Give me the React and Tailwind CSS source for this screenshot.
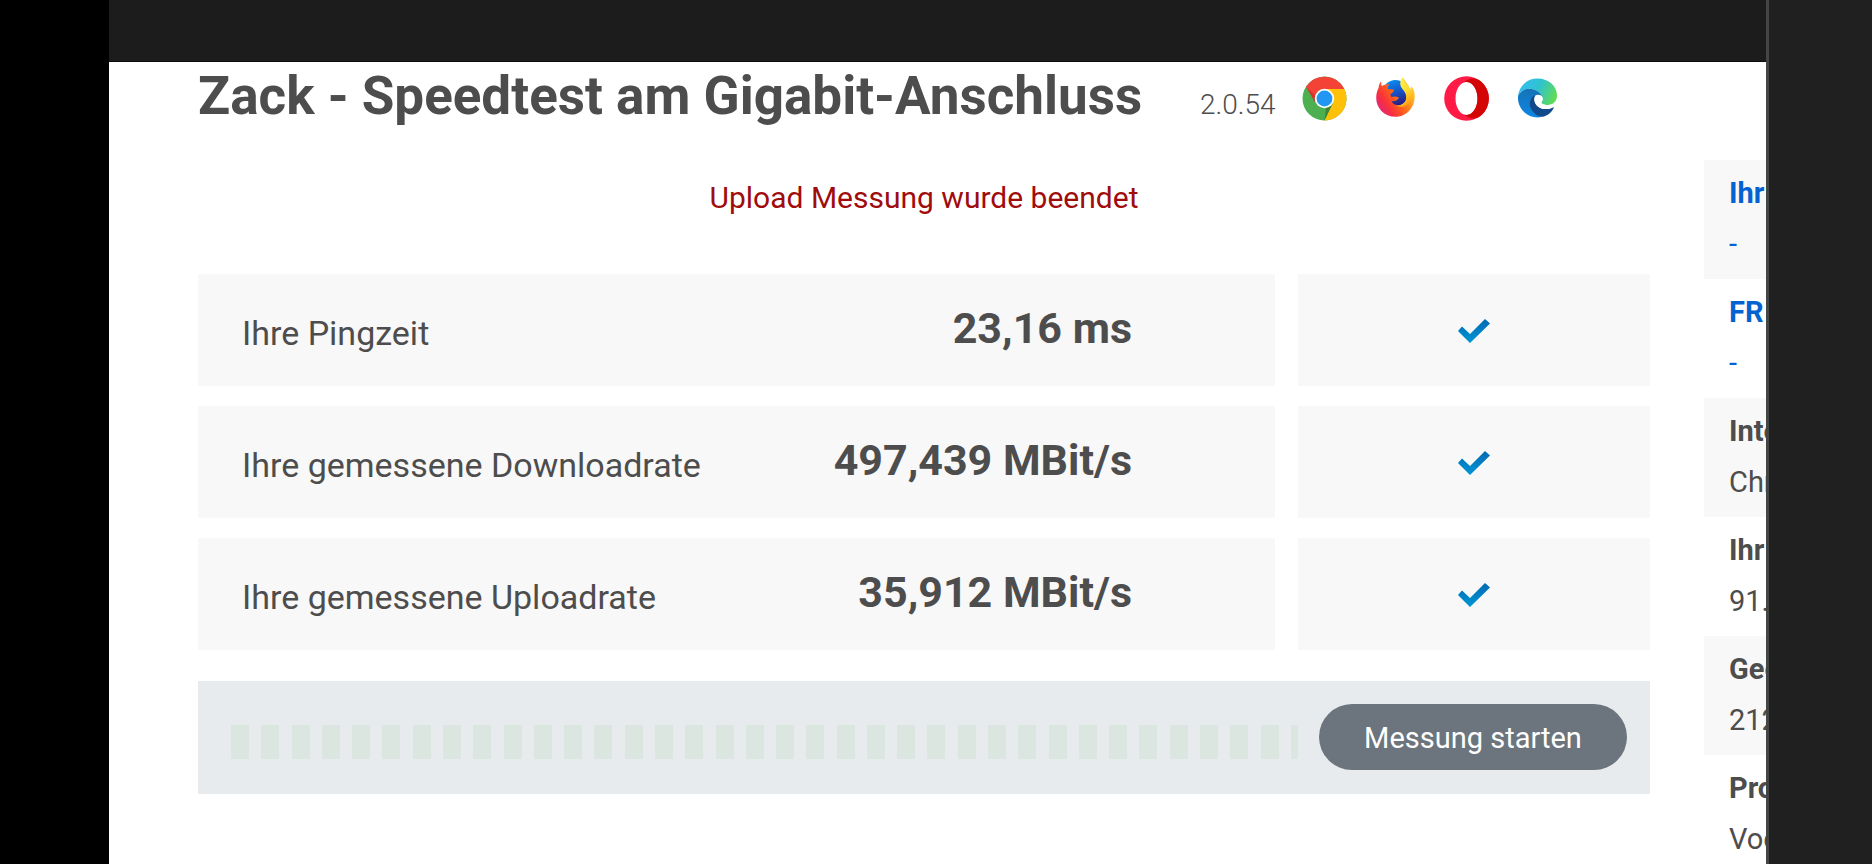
import React from "react";

const results = [
    { label: "Ihre Pingzeit", value: "23,16 ms" },
    { label: "Ihre gemessene Downloadrate", value: "497,439 MBit/s" },
    { label: "Ihre gemessene Uploadrate", value: "35,912 MBit/s" },
];

const details = [
    { label: "Ihr", value: "-", link: true },
    { label: "FR", value: "-", link: true },
    { label: "Inte", value: "Chr" },
    { label: "Ihr", value: "91." },
    { label: "Geg", value: "212" },
    { label: "Pro", value: "Vod" },
];

const segments = Array.from({ length: 36 }, (_, i) => i);

const ChromeIcon = () => (
    <svg viewBox="0 0 45 45" className="size-[45px]" role="img" aria-label="Chrome">
        <circle cx="22.5" cy="22.5" r="22" fill="#4caf50" />
        <path d="M22.5 13H42.3A22 22 0 0 1 22.5 44.5L30.7 27.5Z" fill="#ffc107" />
        <path d="M4 10.8A22 22 0 0 1 42.3 13H22.5A9.7 9.7 0 0 0 13.4 26.5Z" fill="#f44336" />
        <path d="M4 10.8 13 26.3 13.6 20Z" fill="#c62828" opacity=".6" />
        <path d="M30.7 27.5 22.5 44.5 24 32Z" fill="#33691e" opacity=".6" />
        <circle cx="22.5" cy="22.5" r="9.7" fill="#fff" />
        <circle cx="22.5" cy="22.5" r="7.9" fill="#2196f3" />
    </svg>
);

const FirefoxIcon = () => (
    <svg viewBox="0 0 45 45" className="size-[45px]" role="img" aria-label="Firefox">
        <defs>
            <linearGradient id="ffBody" x1="0.9" y1="0.15" x2="0.1" y2="0.7">
                <stop offset="0" stopColor="#ffd92e" />
                <stop offset=".3" stopColor="#ff9a1c" />
                <stop offset=".6" stopColor="#ff5a20" />
                <stop offset=".85" stopColor="#f8303c" />
                <stop offset="1" stopColor="#ea2a63" />
            </linearGradient>
            <linearGradient id="ffGlobe" x1="0.3" y1="0" x2="0.6" y2="1">
                <stop offset="0" stopColor="#0a8df0" />
                <stop offset=".5" stopColor="#1553c8" />
                <stop offset="1" stopColor="#2b1a78" />
            </linearGradient>
            <linearGradient id="ffTail" x1="0.3" y1="0" x2="0.7" y2="1">
                <stop offset="0" stopColor="#fff44f" />
                <stop offset=".5" stopColor="#ffdd33" />
                <stop offset="1" stopColor="#ff980e" />
            </linearGradient>
        </defs>
        <circle cx="22.5" cy="17" r="13" fill="url(#ffGlobe)" />
        <path
            d="M8.3 5.2C8 7 8.2 8.5 8.8 10C11 8.6 14 8 16.5 8.3C15.2 9.3 14.6 11 14.8 13C16.5 13.2 18.5 13.3 20.5 13.4C21.2 14.8 20 16.5 17.6 18C17.4 19 17.6 20 18.4 21C20 20.2 23.2 20 26 21.6C24.8 24 22 25.8 18.6 25.2C20.5 30 28.5 31 32.5 26C36 21.5 34.5 14 30.8 9C29.5 6 29 3.5 29.6 1.2C31.5 4.5 34 7 35.5 9.5C36.5 11.5 37 13 37.2 14.5C38.4 12.5 38.4 11.2 38.2 9.8C40 12 41 14.5 41.4 17C43.5 29.5 34.5 40.8 22.7 40.8C11 40.8 3.3 32 3.2 22C3.2 17.5 4.5 14 5.6 12C5.7 9.2 6.7 6.8 8.3 5.2Z"
            fill="url(#ffBody)"
        />
        <path
            d="M29.6 1.2C27 4.5 26.4 8 28.2 11.2C30.3 14.5 34 17 33 23C32.3 28 27.5 30.2 23 29.5C30 34 39.8 27.5 39.5 18C39 12 34.4 9.8 32.4 7C31 5 30 3.2 29.6 1.2Z"
            fill="url(#ffTail)"
        />
    </svg>
);

const OperaIcon = () => (
    <svg viewBox="0 0 45 45" className="size-[45px]" role="img" aria-label="Opera">
        <path
            fillRule="evenodd"
            d="M22.5.2A22.3 22.3 0 1 0 22.5 44.8A22.3 22.3 0 1 0 22.5.2ZM22.5 6C28.5 6 33.5 13.2 33.5 22.5C33.5 31.8 28.5 39 22.5 39C16.5 39 11.5 31.8 11.5 22.5C11.5 13.2 16.5 6 22.5 6Z"
            fill="#ff1b46"
        />
        <path
            d="M20 6.4C24 2.4 31.5.6 37.4 5.8A22.3 22.3 0 0 1 37.4 39.2C31.5 44.4 24 42.6 20 38.6C27.5 40.8 33.5 32.6 33.5 22.5C33.5 12.4 27.5 4.2 20 6.4Z"
            fill="#d30505"
        />
    </svg>
);

const EdgeIcon = () => (
    <svg viewBox="0 0 45 45" className="size-[45px]" role="img" aria-label="Edge">
        <defs>
            <linearGradient id="edgeTop" x1="0" y1="0.3" x2="1" y2="0.6">
                <stop offset="0" stopColor="#35bdf0" />
                <stop offset=".5" stopColor="#2fc3cf" />
                <stop offset="1" stopColor="#62db52" />
            </linearGradient>
            <linearGradient id="edgeLeft" x1="0.5" y1="0" x2="0.4" y2="1">
                <stop offset="0" stopColor="#1673b5" />
                <stop offset="1" stopColor="#0d86e3" />
            </linearGradient>
        </defs>
        <path
            d="M3 20.5C4 10 12 2.6 22.5 2.6C34 2.6 42 10.5 42 19.5C42 25.8 37.5 29 32.5 29C29 29 26.3 27.8 26.3 26.5C26.3 25.6 27.6 25.4 27.6 22.4C27.6 18.5 22 12.8 14 12.8C8 12.8 4.5 16.5 3 20.5Z"
            fill="url(#edgeTop)"
        />
        <path
            d="M3 20.5C4.5 16 8.5 12.8 14 12.8C22 12.8 27.6 18 27.6 22.4C27.6 19.8 24 18 21 19.5C16.5 21.5 14.5 30 19.5 36C21.5 38.5 24.5 40 27 40.8C14 44 2.2 33.5 3 20.5Z"
            fill="url(#edgeLeft)"
        />
        <path
            d="M20.5 19C15.5 21 13 27.5 16.5 33.5C19.5 38.6 24.5 41.2 28 40.7C32.5 39.6 36.5 36.4 38.6 32.2C39 31.4 38.4 31 37.6 31.4C33 33.8 27 33.6 23 30.4C19 27.2 18.6 22.4 20.5 19Z"
            fill="#114a8b"
        />
        <path
            d="M20.5 19.4C23.5 17.6 27.6 19.4 27.6 22.4C27.6 25.4 26.3 25.6 26.3 26.5C26.3 27.8 29 29 32.5 29C35 29 37.2 28.4 39 27.2L37.6 31.4C33 33.8 27 33.6 23 30.4C19 27.2 18.6 22.4 20.5 19.4Z"
            fill="#fff"
        />
    </svg>
);

const CheckIcon = () => (
    <svg viewBox="0 0 34 26" className="h-[26px] w-[34px]" role="img" aria-label="Abgeschlossen">
        <defs>
            <linearGradient id="check" x1="0" y1="0" x2="0" y2="1">
                <stop offset="0" stopColor="#0068b4" />
                <stop offset="1" stopColor="#0097d6" />
            </linearGradient>
        </defs>
        <path d="M5 8.6 13 16 28 1 33 5.6 13 25 1 13Z" fill="url(#check)" />
    </svg>
);

const App = () => {
    return (
        <div className="flex h-screen overflow-hidden bg-black font-['Roboto',sans-serif] text-[#4d4d4d]">
            <div className="w-[109px] shrink-0" />

            <div className="flex min-w-0 flex-1 flex-col bg-white">
                <div className="h-[62px] shrink-0 border-b border-[#0c0c0c] bg-[#1c1c1c]" />

                <div className="flex gap-[54px] pl-[89px]">
                    <main className="min-w-0 flex-1">
                        {/* Title, version and supported browsers */}
                        <header className="flex h-[70px] items-baseline whitespace-nowrap">
                            <h1 className="w-[1002px] text-[53px] leading-[68px] font-bold">
                                Zack - Speedtest am Gigabit-Anschluss
                            </h1>
                            <span className="w-[102px] text-[28px] leading-[40px] font-light">2.0.54</span>
                            <div className="flex gap-[26px] self-start pt-[14px]">
                                <ChromeIcon />
                                <FirefoxIcon />
                                <OperaIcon />
                                <EdgeIcon />
                            </div>
                        </header>

                        <p className="mt-[46px] mb-[56px] text-center text-[30px] leading-[40px] text-[#a00c0c]">
                            Upload Messung wurde beendet
                        </p>

                        {/* Results */}
                        <div className="flex flex-col gap-5">
                            {results.map((result) => (
                                <div key={result.label} className="flex h-[112px] gap-[23px]">
                                    <div className="flex flex-1 items-center justify-between bg-[#f8f8f8] pr-[143px] pl-11 whitespace-nowrap">
                                        <span className="pt-1.5 text-[34px] leading-[40px]">{result.label}</span>
                                        <span className="pb-1 text-[43px] leading-[48px] font-bold">{result.value}</span>
                                    </div>
                                    <div className="flex w-[352px] items-center justify-center bg-[#f8f8f8] pt-0.5">
                                        <CheckIcon />
                                    </div>
                                </div>
                            ))}
                        </div>

                        {/* Progress bar and start button */}
                        <div className="mt-[31px] flex h-[113px] items-center gap-[21px] bg-[#e7ebee] pr-[23px] pl-[33px]">
                            <div className="mt-2 flex h-[34px] min-w-0 flex-1 justify-between">
                                {segments.map((i) => (
                                    <div key={i} className="w-[18px] bg-[#dbe6e0] last:w-[7px]" />
                                ))}
                            </div>
                            <button
                                type="button"
                                className="mb-0.5 h-[66px] w-[308px] rounded-full bg-[#6c757d] pt-0.5 text-[29px] leading-[40px] text-white"
                            >
                                Messung starten
                            </button>
                        </div>
                    </main>

                    <aside className="w-[62px] shrink-0 overflow-hidden pt-[98px]">
                        <dl className="text-[29px]">
                            {details.map((item, i) => (
                                <div
                                    key={i}
                                    className={`h-[119px] pt-[8px] pl-[25px] whitespace-nowrap odd:bg-[#f8f8f8] ${item.link ? "text-[#0563d1]" : ""}`}
                                >
                                    <dt className="leading-[51px] font-bold">{item.label}</dt>
                                    <dd className="leading-[51px]">{item.value}</dd>
                                </div>
                            ))}
                        </dl>
                    </aside>
                </div>
            </div>

            <div className="w-[106px] shrink-0 border-l-3 border-[#434645] bg-[#202020]" />
        </div>
    );
};

export default App;
